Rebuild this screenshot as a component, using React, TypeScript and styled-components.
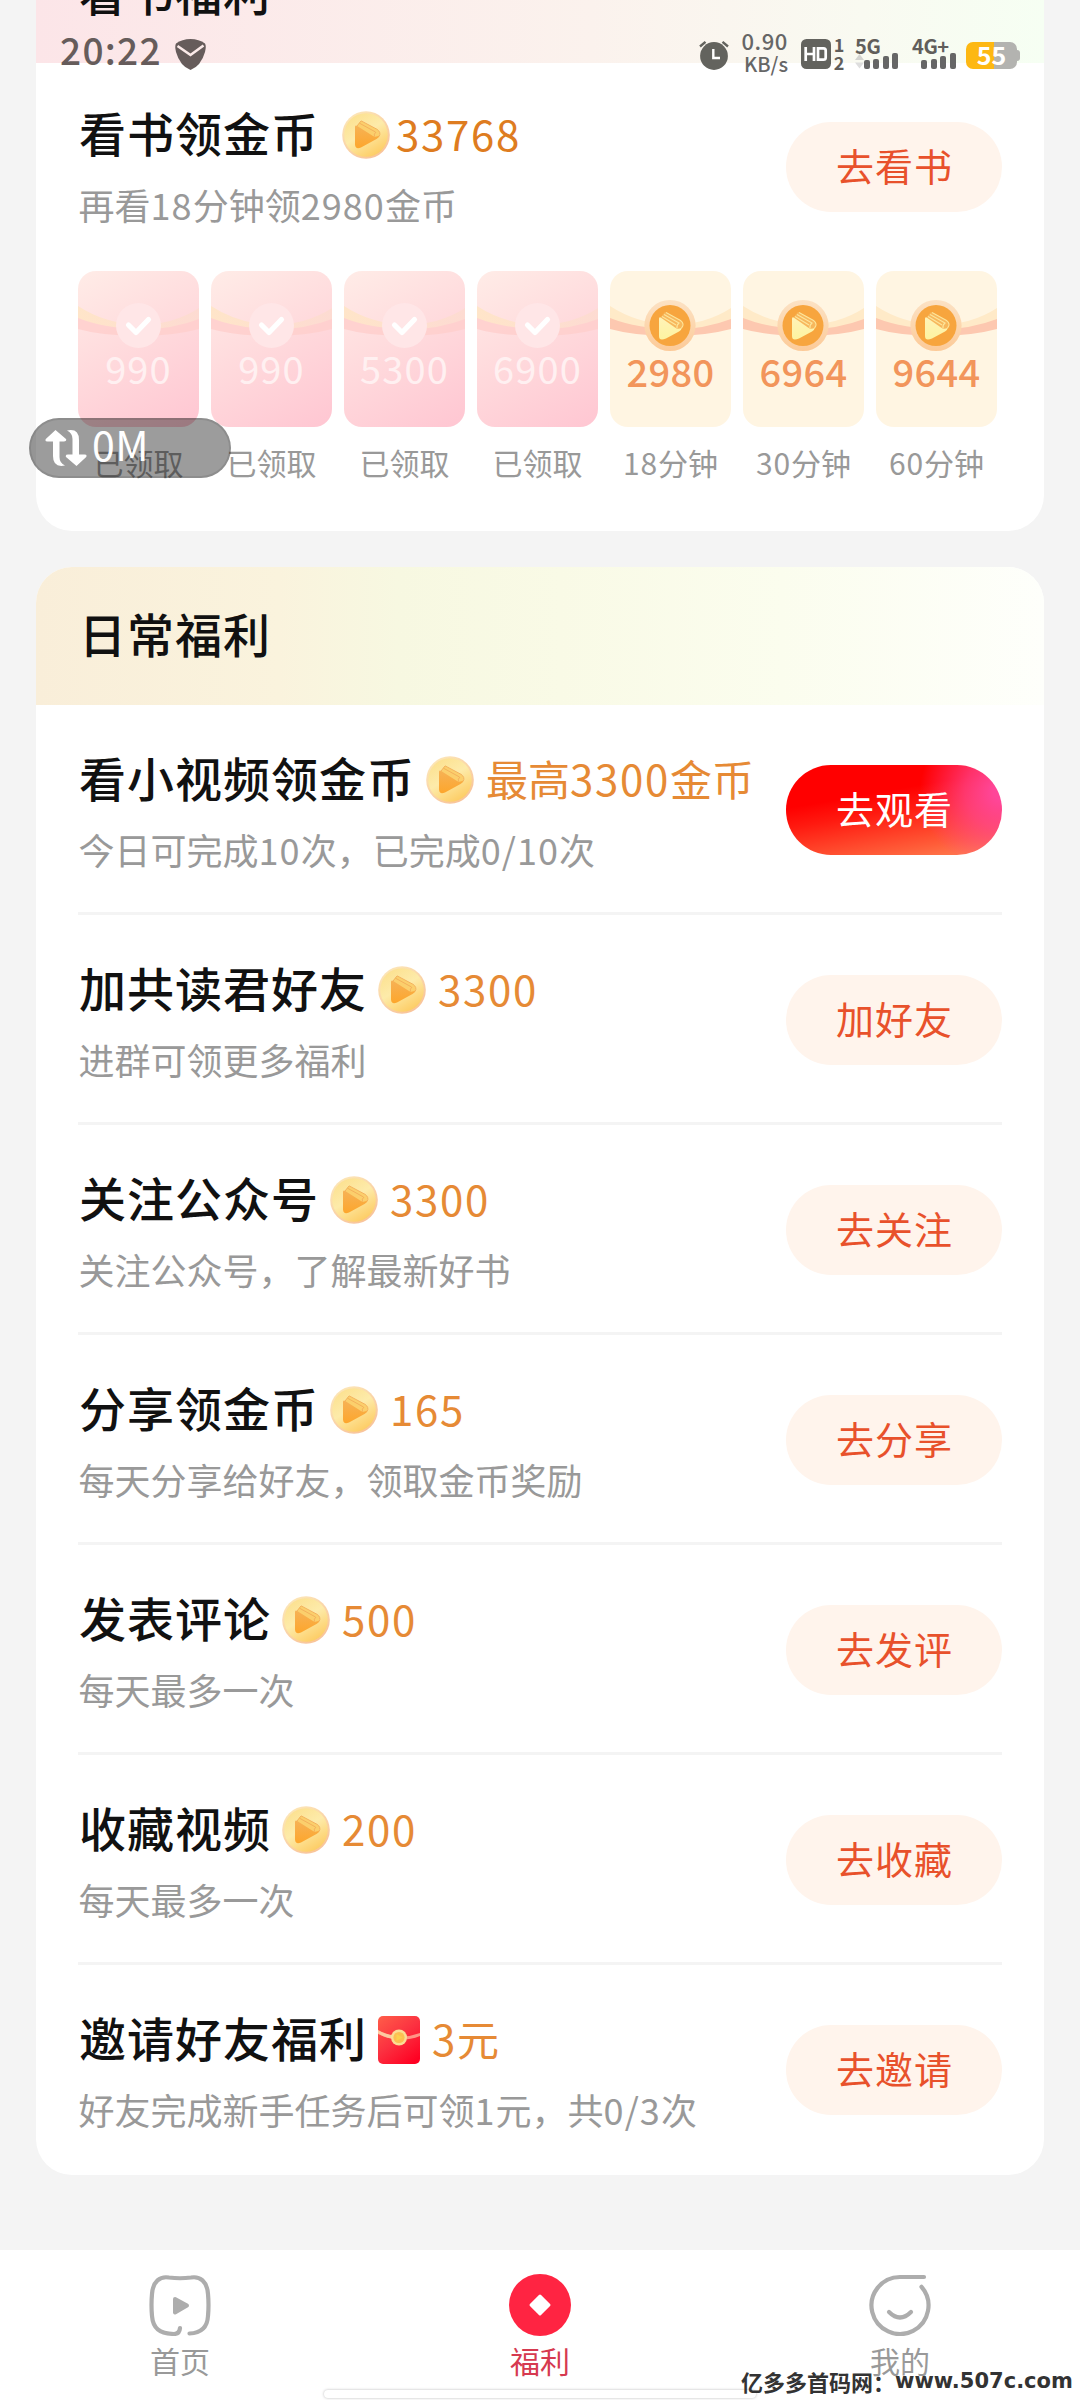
import React from "react";
import styled, { createGlobalStyle, css } from "styled-components";

const FONT = `"Noto Sans CJK SC", "Noto Sans", sans-serif`;

const GlobalStyle = createGlobalStyle`
  * { box-sizing: border-box; }
  html, body { margin: 0; padding: 0; background: #f4f4f4; }
  body { font-family: ${FONT}; }
  button { font-family: inherit; border: 0; }
`;

/* ---------- page ---------- */

const Screen = styled.div`
  position: relative;
  width: 1080px;
  height: 2400px;
  overflow: hidden;
  background: #f4f4f4;
  display: flex;
  flex-direction: column;
`;

const Content = styled.main`
  flex: 1;
  min-height: 0;
  padding: 0 36px;
  display: flex;
  flex-direction: column;
  gap: 36px;
`;

const Card = styled.section<{ $pull?: number }>`
  flex: none;
  margin-top: ${(p) => -(p.$pull ?? 0)}px;
  background: #fff;
  border-radius: 36px;
  overflow: hidden;
`;

const CardHeader = styled.header<{ $tone: "rose" | "cream" }>`
  height: 138px;
  padding: 0 42px 6px 43px;
  display: flex;
  align-items: center;
  font-size: 47px;
  letter-spacing: 1px;
  font-weight: 500;
  line-height: 60px;
  color: #111;
  background: ${(p) =>
    p.$tone === "rose"
      ? "linear-gradient(90deg, #fce5e8 0%, #fbf2ed 55%, #f9faf1 82%, #f6fff3 100%)"
      : "linear-gradient(90deg, #f9eed9 0%, #faf3dd 24%, #f7f8e1 36%, #f9fae6 52%, #fbfdee 74%, #fefffb 100%)"};
`;

/* ---------- text ---------- */

const Digits = styled.span`
  letter-spacing: 0.03em;
`;

function Mixed({ text }: { text: string }) {
  return (
    <>
      {text.split(/([0-9/]+)/).map((part, i) =>
        i % 2 ? <Digits key={i}>{part}</Digits> : part
      )}
    </>
  );
}

/* ---------- task rows ---------- */

const Row = styled.div<{ $last?: boolean }>`
  height: 210px;
  margin: 0 42px;
  padding-top: 45px;
  display: flex;
  align-items: flex-start;
  justify-content: space-between;
  border-bottom: 3px solid ${(p) => (p.$last ? "transparent" : "#f4f4f4")};
`;

const ReadingRow = styled.div`
  height: 208px;
  margin: 0 42px;
  padding-top: 42px;
  display: flex;
  align-items: flex-start;
  justify-content: space-between;
`;

const RowText = styled.div`
  display: flex;
  flex-direction: column;
  gap: 15px;
  white-space: nowrap;
`;

const TitleLine = styled.div<{ $wide?: boolean }>`
  display: flex;
  align-items: center;
  height: 60px;
  gap: 12px;
  ${(p) =>
    p.$wide &&
    css`
      gap: 6px;
      > :first-child {
        margin-right: 17px;
      }
    `}
`;

const Title = styled.h2`
  margin: 0 -1px 0 1px;
  padding-bottom: 6px;
  font-size: 47px;
  letter-spacing: 1px;
  font-weight: 500;
  line-height: 60px;
  color: #111;
`;

const Reward = styled.span<{ $deep?: boolean }>`
  padding-bottom: 5px;
  font-size: 42px;
  line-height: 60px;
  color: ${(p) => (p.$deep ? "#de7c20" : "#e68a35")};
  ${Digits} {
    letter-spacing: 0.04em;
  }
`;

const Subtitle = styled.p`
  margin: 0;
  text-indent: 0.5px;
  font-size: 36px;
  line-height: 48px;
  color: #999;
`;

const ActionButton = styled.button<{ $hot?: boolean; $drop?: number }>`
  flex: none;
  width: 216px;
  height: 90px;
  margin-top: ${(p) => p.$drop ?? 15}px;
  padding: 0 0 0 1px;
  border-radius: 45px;
  font-size: 38px;
  letter-spacing: 1px;
  line-height: 86px;
  padding-bottom: 4px;
  text-align: center;
  color: ${(p) => (p.$hot ? "#fff" : "#e8512b")};
  background: ${(p) =>
    p.$hot
      ? `radial-gradient(ellipse 38% 90% at 100% 30%, #ff4699 10%, rgba(255, 70, 150, 0.7) 45%, rgba(255, 60, 80, 0) 100%),
         linear-gradient(170deg, #ff0000 34%, #ff1a10 50%, #ff5c38 82%, #ff8455 100%)`
      : "#fff4ec"};
`;

/* ---------- milestone packets ---------- */

const Packets = styled.div`
  display: flex;
  gap: 12px;
  padding: 0 42px 51px;
`;

const PacketColumn = styled.div`
  width: 121px;
  display: flex;
  flex-direction: column;
  align-items: center;
  gap: 17px;
`;

const Packet = styled.div<{ $done: boolean }>`
  position: relative;
  width: 121px;
  height: 156px;
  border-radius: 18px;
  overflow: hidden;
  display: flex;
  flex-direction: column;
  align-items: center;
  padding-top: ${(p) => (p.$done ? 73 : 76)}px;
  background: ${(p) =>
    p.$done
      ? "linear-gradient(150deg, #ffece7 0%, #ffd9dc 50%, #ffc6d2 100%)"
      : "#fff5e2"};
`;

const PacketArt = styled.svg`
  position: absolute;
  left: 0;
  top: 0;
`;

const PacketAmount = styled.span<{ $done: boolean }>`
  position: relative;
  font-size: 38px;
  line-height: 48px;
  letter-spacing: ${(p) => (p.$done ? "0.03em" : "0.01em")};
  font-weight: ${(p) => (p.$done ? 400 : 500)};
  color: ${(p) => (p.$done ? "#fff0f1" : "#f2955b")};
`;

const PacketLabel = styled.span`
  font-size: 30px;
  line-height: 36px;
  color: #999;
  white-space: nowrap;
`;

/* ---------- bottom navigation ---------- */

const NavBar = styled.nav`
  flex: none;
  height: 150px;
  background: #fff;
  display: grid;
  grid-template-columns: repeat(3, 1fr);
`;

const NavItem = styled.div<{ $active?: boolean }>`
  display: flex;
  flex-direction: column;
  align-items: center;
  padding-top: 24px;
  gap: 6px;
  font-size: 30px;
  line-height: 36px;
  color: ${(p) => (p.$active ? "#d63a50" : "#999")};
`;

/* ---------- overlays ---------- */

const StatusBar = styled.div`
  position: absolute;
  left: 0;
  top: 30px;
  width: 1080px;
  height: 45px;
  padding: 0 60px;
  display: flex;
  justify-content: space-between;
  color: #615e5b;
`;

const StatusGroup = styled.div`
  display: flex;
  align-items: flex-start;
`;

const Clock = styled.span`
  font-size: 37px;
  line-height: 39px;
  font-weight: 500;
  letter-spacing: 1.3px;
  width: 115px;
  color: #665c5b;
`;

const NetSpeed = styled.div`
  width: 50px;
  margin: 0 13px 0 9px;
  display: flex;
  flex-direction: column;
  align-items: flex-end;
  font-weight: 500;
  line-height: 22px;
  color: #666;
`;

const SpeedValue = styled.span`
  font-size: 22px;
  line-height: 21px;
  letter-spacing: 0.6px;
`;

const SpeedUnit = styled.span`
  font-size: 20px;
  line-height: 25px;
`;

const SimStack = styled.div`
  width: 14px;
  margin: 5px 9px 0 1px;
  display: flex;
  flex-direction: column;
  align-items: center;
  font-size: 18px;
  line-height: 18px;
  font-weight: 700;
`;

const Signal = styled.div<{ $w: number }>`
  width: ${(p) => p.$w}px;
  display: flex;
  flex-direction: column;
  font: 700 20px/20px ${FONT};
  letter-spacing: -0.4px;
  padding-top: 6px;
`;

const SignalBars = styled.div<{ $left: number }>`
  margin: -3px 0 0 ${(p) => p.$left}px;
  display: flex;
  align-items: flex-end;
  gap: 3.6px;
  height: 16px;
`;

const SignalBar = styled.i<{ $h: number; $tight?: boolean }>`
  width: 6px;
  height: ${(p) => p.$h}px;
  margin-left: ${(p) => (p.$tight ? -4 : 0)}px;
  border-radius: 2px;
  background: #666;
`;

const Battery = styled.div`
  margin-top: 12px;
  width: 51px;
  height: 27px;
  border-radius: 7px;
  background: linear-gradient(90deg, #fdb813 0 28px, #b3b3b0 28px);
  color: #fff;
  font-size: 25px;
  line-height: 24px;
  font-weight: 700;
  text-align: center;
`;

const BatteryTip = styled.i`
  width: 3px;
  height: 11px;
  margin-top: 20px;
  border-radius: 0 4px 4px 0;
  background: #b3b3b0;
`;

const TrafficPill = styled.div`
  position: absolute;
  left: 29px;
  top: 418px;
  width: 202px;
  height: 60px;
  padding: 0 14px;
  border-radius: 30px;
  background: rgba(0, 0, 0, 0.39);
  border: 2px solid rgba(0, 0, 0, 0.1);
  display: flex;
  align-items: center;
  gap: 5px;
  color: #fff;
  font-size: 41px;
  line-height: 50px;
`;

const PillText = styled.span`
  margin-top: -10px;
  letter-spacing: 0.5px;
`;

const HomeIndicator = styled.div`
  position: absolute;
  left: 324px;
  top: 2390px;
  width: 432px;
  height: 8px;
  border-radius: 4px;
  background: #fff;
  box-shadow: 0 0 3px rgba(0, 0, 0, 0.28);
`;

const SiteMark = styled.div`
  position: absolute;
  left: 741px;
  top: 2367px;
  display: flex;
  font-size: 22px;
  line-height: 28px;
  font-weight: 700;
  color: #333;
  white-space: nowrap;
`;

const SiteUrl = styled.span`
  font-family: "DejaVu Sans", sans-serif;
  font-weight: 700;
  font-size: 21px;
`;

/* ---------- icons ---------- */

const ShieldSvg = styled.svg`
  margin-top: 9px;
`;

const AlarmSvg = styled.svg`
  margin-top: 10.5px;
`;

function Coin() {
  return (
    <svg width="48" height="48" viewBox="0 0 48 48">
      <defs>
        <linearGradient id="coinRim" x1="0" y1="0" x2="0.7" y2="1">
          <stop offset="0" stopColor="#fdebbb" />
          <stop offset="1" stopColor="#f8c39a" />
        </linearGradient>
        <linearGradient id="coinFace" x1="0.2" y1="0" x2="0.8" y2="1">
          <stop offset="0" stopColor="#fce08e" />
          <stop offset="0.45" stopColor="#fdebaa" />
          <stop offset="1" stopColor="#fdc95c" />
        </linearGradient>
        <linearGradient id="coinBook" x1="0" y1="0" x2="0" y2="1">
          <stop offset="0" stopColor="#f6b256" />
          <stop offset="1" stopColor="#fda62c" />
        </linearGradient>
      </defs>
      <circle cx="24" cy="24" r="23.8" fill="url(#coinRim)" />
      <circle cx="24" cy="24" r="21.8" fill="url(#coinFace)" />
      <path d="M19 10 L35 18.500 Q39.500 22 36 26.500 L33 28 L14 16 Z" fill="#fbcf6c" />
      <path
        d="M13 16 Q13 13.500 15.200 14.900 L31 25 Q33.500 26.500 37.500 24.500 Q37 26.500 34.500 28 L19 36.500 Q13.500 39 13 33.500 Z"
        fill="url(#coinBook)"
      />
      <path
        d="M19 9.800 L35 18.300 Q39.500 21.500 37 25.500 M17.500 12.200 L33.500 21 M19 10 L15 15 M34 21 Q31.500 23 32.500 25.500"
        fill="none"
        stroke="#f4b15c"
        strokeWidth="1"
      />
    </svg>
  );
}

function RedPacket() {
  return (
    <svg width="42" height="48" viewBox="0 0 42 48">
      <defs>
        <linearGradient id="rpBody" x1="0.1" y1="0" x2="0.8" y2="1">
          <stop offset="0" stopColor="#ff5a48" />
          <stop offset="0.5" stopColor="#fb3040" />
          <stop offset="1" stopColor="#ff0022" />
        </linearGradient>
      </defs>
      <rect width="42" height="48" rx="5" fill="url(#rpBody)" />
      <path d="M0 14.500 Q21 25 42 17 L42 20 Q21 28.500 0 18 Z" fill="#ff9585" />
      <path d="M0 14 Q9 19.500 21 19.500 L21 23 Q9 23 0 17.500 Z" fill="#fdc9a0" />
      <circle cx="21" cy="21.500" r="8" fill="#fbdc94" />
      <circle cx="21" cy="21.500" r="5.600" fill="#fcbf52" />
      <path d="M18.500 18 L24.500 21.500 L18.500 25 Z" fill="#fbd04e" />
    </svg>
  );
}

function PacketDrawing({ done }: { done: boolean }) {
  return (
    <PacketArt width="121" height="156" viewBox="0 0 121 156">
      <defs>
        <linearGradient id="packetBook" x1="0" y1="0" x2="0" y2="1">
          <stop offset="0" stopColor="#fff3b8" />
          <stop offset="1" stopColor="#fdf3a0" />
        </linearGradient>
        <linearGradient id="doneBand" x1="0" y1="0" x2="1" y2="0">
          <stop offset="0" stopColor="#ffe5c9" />
          <stop offset="1" stopColor="#fddbd2" />
        </linearGradient>
        <linearGradient id="packetHalo" x1="0" y1="0" x2="0" y2="1">
          <stop offset="0" stopColor="#fce2c4" />
          <stop offset="1" stopColor="#fcca98" />
        </linearGradient>
      </defs>
      <path
        d="M0 46 Q28 57 60 57 Q95 57 121 46 L121 58 Q95 65 62 65 Q25 65 0 58 Z"
        fill={done ? "#ffcfcd" : "#fdc8b0"}
        opacity={done ? 0.85 : 1}
      />
      <path
        d="M0 35 Q26 52 60 54 Q95 54 121 37 L121 48 Q95 58 66 58 Q28 58 0 47 Z"
        fill={done ? "url(#doneBand)" : "#ffeac8"}
      />
      {done ? (
        <>
          <circle cx="60.500" cy="54.500" r="22.500" fill="#ffe6e7" />
          <path
            d="M50.500 54 L58 61.500 L70.500 48.500"
            fill="none"
            stroke="#fff"
            strokeWidth="5.200"
            strokeLinecap="round"
            strokeLinejoin="round"
          />
        </>
      ) : (
        <>
          <circle cx="60" cy="54.500" r="25.600" fill="url(#packetHalo)" />
          <circle cx="60" cy="54.500" r="20.500" fill="#f7a53e" />
          <path
            d="M55 41 L70 49 Q74 52 71.500 57 L68 59 L50 47 Z"
            fill="#f7b75c"
          />
          <path
            d="M49 48 Q49 45.500 51 46.800 L65 56.500 Q68 59 72 56.500 Q71.500 59 69 60.500 L56 67.500 Q49 70.500 49 65 Z"
            fill="url(#packetBook)"
          />
          <path
            d="M56 41.500 L70.500 49.500 Q75 53 71.500 57 M54 43.500 L69 52 Q66.500 54 67 57 M52 45.500 L66 54"
            fill="none"
            stroke="#fde59a"
            strokeWidth="1.200"
          />
        </>
      )}
    </PacketArt>
  );
}

function ShieldIcon() {
  return (
    <ShieldSvg width="31" height="31" viewBox="0 0 31 31">
      <path d="M15.500 0 Q24 0 30 4.500 Q31.500 7 30 13 Q26 27 15.500 31 Q5 27 1 13 Q-.5 7 1 4.500 Q7 0 15.500 0Z" fill="#665c5b" />
      <path d="M2.500 7 L15.500 16 L28.500 6.500" fill="none" stroke="#fbeae9" strokeWidth="2.600" />
    </ShieldSvg>
  );
}

function AlarmIcon() {
  return (
    <AlarmSvg width="30" height="29" viewBox="0 0 30 29">
      <circle cx="15" cy="15" r="13.900" fill="#63635e" />
      <path d="M1 5.500 L6.500 .9 M29 5.500 L23.500 .9" stroke="#63635e" strokeWidth="2.400" />
      <path d="M14.300 8 V17 H21" fill="none" stroke="#fff" strokeWidth="2.400" />
    </AlarmSvg>
  );
}

function HdIcon() {
  return (
    <ShieldSvg width="30" height="30" viewBox="0 0 30 30">
      <rect width="30" height="30" rx="5.500" fill="#63635e" />
      <path
        d="M4.700 8 V22 M13 8 V22 M4.700 15 H13 M17 9.300 V20.700 H22.500 Q24.700 20.700 24.700 18.500 V11.500 Q24.700 9.300 22.500 9.300 Z"
        fill="none"
        stroke="#fff"
        strokeWidth="2.700"
      />
    </ShieldSvg>
  );
}

function DataArrows() {
  return (
    <svg width="9" height="16" viewBox="0 0 9 16">
      <path d="M4.500 1 L9 7 H0Z" fill="#d4d4d0" />
      <path d="M4.500 15.500 L9 9.500 H0Z" fill="#dedede" />
    </svg>
  );
}

function TransferIcon() {
  return (
    <svg width="42" height="38" viewBox="0 0 42 38">
      <path d="M10.500 1 L21 10 Q22 12.500 19 12.500 H14.500 V28 Q14.500 34 20 36.500 Q8 39 8 27 V12.500 H2.500 Q-.5 12.500 .8 10 Z" fill="#fff" />
      <path d="M31.500 37 L21 28 Q20 25.500 23 25.500 H27.500 V10 Q27.500 4 22 1.500 Q34 -1 34 11 V25.500 H39.500 Q42.500 25.500 41.200 28 Z" fill="#fff" />
    </svg>
  );
}

function HomeIcon() {
  return (
    <svg width="62" height="62" viewBox="0 0 62 62" fill="none">
      <path
        d="M40.500 59.500 C54 59 58.500 51 59 42 Q60 31 59 20 C58 7 51 2 42 3.500 Q31 5 20 3.500 C11 2 4 7 3 20 Q2 31 3 42 C4 54 10 59.500 25 60 Q30.500 60 31 54"
        stroke="#adadad"
        strokeWidth="4.200"
        strokeLinecap="round"
      />
      <path
        d="M26 25 L38 31.500 L26 38.500 Z"
        fill="#adadad"
        stroke="#adadad"
        strokeWidth="4"
        strokeLinejoin="round"
      />
    </svg>
  );
}

function WelfareIcon() {
  return (
    <svg width="62" height="62" viewBox="0 0 62 62">
      <circle cx="31" cy="31" r="31" fill="#ff2442" />
      <path d="M31 22 L40 31 L31 40 L22 31 Z" fill="#fff" stroke="#fff" strokeWidth="3" strokeLinejoin="round" />
    </svg>
  );
}

function ProfileIcon() {
  return (
    <svg width="62" height="62" viewBox="0 0 62 62" fill="none" stroke="#adadad" strokeWidth="4.200" strokeLinecap="round">
      <path d="M55 3 H31 A28.500 28.500 0 1 0 52.500 12.800" />
      <path d="M20 38 Q31 49 42 38" />
    </svg>
  );
}

/* ---------- data ---------- */

const packets = [
  { amount: "990", label: "已领取", done: true },
  { amount: "990", label: "已领取", done: true },
  { amount: "5300", label: "已领取", done: true },
  { amount: "6900", label: "已领取", done: true },
  { amount: "2980", label: "18分钟", done: false },
  { amount: "6964", label: "30分钟", done: false },
  { amount: "9644", label: "60分钟", done: false },
];

const tasks = [
  { title: "看小视频领金币", reward: "最高3300金币", note: "今日可完成10次，已完成0/10次", action: "去观看", hot: true },
  { title: "加共读君好友", reward: "3300", note: "进群可领更多福利", action: "加好友" },
  { title: "关注公众号", reward: "3300", note: "关注公众号，了解最新好书", action: "去关注" },
  { title: "分享领金币", reward: "165", note: "每天分享给好友，领取金币奖励", action: "去分享" },
  { title: "发表评论", reward: "500", note: "每天最多一次", action: "去发评" },
  { title: "收藏视频", reward: "200", note: "每天最多一次", action: "去收藏" },
  { title: "邀请好友福利", reward: "3元", note: "好友完成新手任务后可领1元，共0/3次", action: "去邀请", packet: true },
];

export default function App() {
  return (
    <Screen>
      <GlobalStyle />
      <Content>
        <Card $pull={75}>
          <CardHeader $tone="rose">看书福利</CardHeader>
          <ReadingRow>
            <RowText>
              <TitleLine $wide>
                <Title>看书领金币</Title>
                <Coin />
                <Reward $deep>
                  <Mixed text="33768" />
                </Reward>
              </TitleLine>
              <Subtitle>
                <Mixed text="再看18分钟领2980金币" />
              </Subtitle>
            </RowText>
            <ActionButton $drop={17}>去看书</ActionButton>
          </ReadingRow>
          <Packets>
            {packets.map((p, i) => (
              <PacketColumn key={i}>
                <Packet $done={p.done}>
                  <PacketDrawing done={p.done} />
                  <PacketAmount $done={p.done}>{p.amount}</PacketAmount>
                </Packet>
                <PacketLabel>
                  <Mixed text={p.label} />
                </PacketLabel>
              </PacketColumn>
            ))}
          </Packets>
        </Card>

        <Card>
          <CardHeader $tone="cream">日常福利</CardHeader>
          {tasks.map((t, i) => (
            <Row key={t.title} $last={i === tasks.length - 1}>
              <RowText>
                <TitleLine>
                  <Title>{t.title}</Title>
                  {t.packet ? <RedPacket /> : <Coin />}
                  <Reward>
                    <Mixed text={t.reward} />
                  </Reward>
                </TitleLine>
                <Subtitle>
                  <Mixed text={t.note} />
                </Subtitle>
              </RowText>
              <ActionButton $hot={t.hot}>{t.action}</ActionButton>
            </Row>
          ))}
        </Card>
      </Content>

      <NavBar>
        <NavItem>
          <HomeIcon />
          首页
        </NavItem>
        <NavItem $active>
          <WelfareIcon />
          福利
        </NavItem>
        <NavItem>
          <ProfileIcon />
          我的
        </NavItem>
      </NavBar>

      <StatusBar>
        <StatusGroup>
          <Clock>20:22</Clock>
          <ShieldIcon />
        </StatusGroup>
        <StatusGroup>
          <AlarmIcon />
          <NetSpeed>
            <SpeedValue>0.90</SpeedValue>
            <SpeedUnit>KB/s</SpeedUnit>
          </NetSpeed>
          <HdIcon />
          <SimStack>
            <span>1</span>
            <span>2</span>
          </SimStack>
          <Signal $w={57}>
            5G
            <SignalBars $left={0}>
              <DataArrows />
              <SignalBar $h={9} $tight />
              <SignalBar $h={10} />
              <SignalBar $h={13} />
              <SignalBar $h={16} />
            </SignalBars>
          </Signal>
          <Signal $w={54}>
            4G+
            <SignalBars $left={9}>
              <SignalBar $h={9} />
              <SignalBar $h={10} />
              <SignalBar $h={13} />
              <SignalBar $h={16} />
            </SignalBars>
          </Signal>
          <Battery>55</Battery>
          <BatteryTip />
        </StatusGroup>
      </StatusBar>

      <TrafficPill>
        <TransferIcon />
        <PillText>0M</PillText>
      </TrafficPill>

      <HomeIndicator />
      <SiteMark>
        亿多多首码网：<SiteUrl>www.507c.com</SiteUrl>
      </SiteMark>
    </Screen>
  );
}
